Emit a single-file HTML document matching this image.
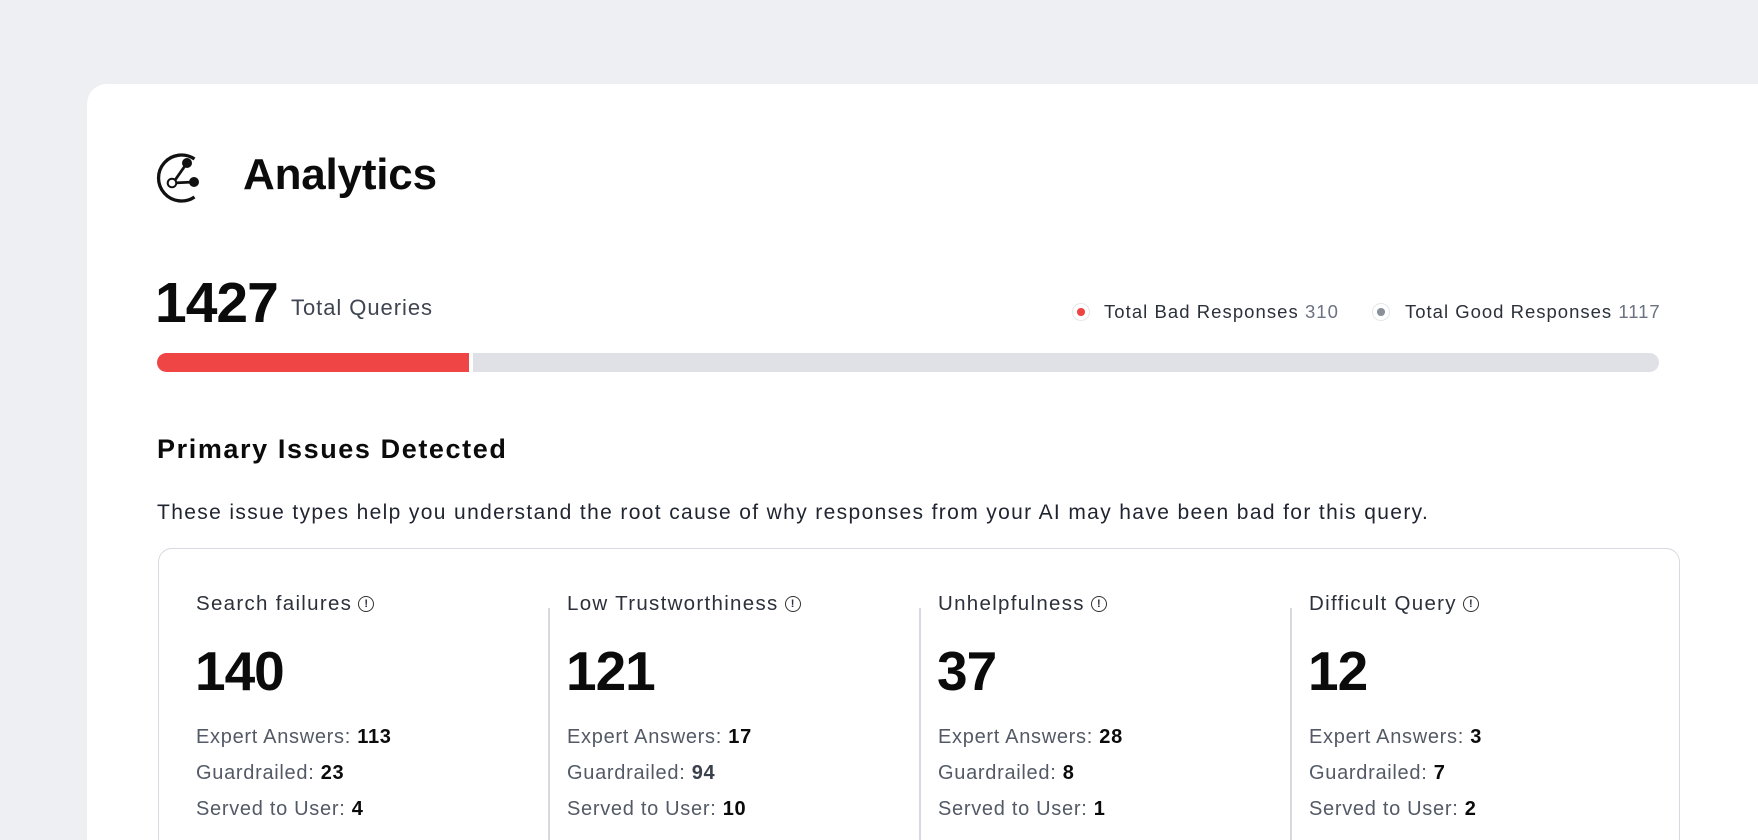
<!DOCTYPE html>
<html><head><meta charset="utf-8"><style>
*{margin:0;padding:0;box-sizing:border-box}
html,body{width:1758px;height:840px;overflow:hidden}
body{background:#eeeff3;font-family:"Liberation Sans",Arial,sans-serif;color:#0b0b0b}
#wrap{position:relative;width:1758px;height:840px;overflow:hidden}
.card{position:absolute;left:87px;top:84px;width:1671px;height:756px;background:#fff;border-radius:20px 0 0 0}
.abs{position:absolute;white-space:nowrap}
.title{left:243px;top:150px;font-size:44px;font-weight:bold;letter-spacing:-0.2px}
.big{font-weight:bold;letter-spacing:-1px}
.muted{color:#3f4552}
.leg{font-size:18.5px;color:#2b303b;top:301px;letter-spacing:1.05px}
.leg span{color:#6b7280}
.dot{position:absolute;width:18px;height:18px;border-radius:50%;border:1.5px solid #e5e7eb;top:303px;background:#fff}
.dot i{position:absolute;left:4px;top:4px;width:7.5px;height:7.5px;border-radius:50%}
.bar{position:absolute;top:353px;height:19px;border-radius:10px}
.box{position:absolute;left:158px;top:548px;width:1522px;height:320px;border:1.5px solid #d6d9df;border-radius:14px}
.div{position:absolute;top:608px;width:1.5px;height:240px;background:#d6d9df}
.lbl{font-size:20.5px;color:#2b303b;top:592px;letter-spacing:1.3px}
.info{display:inline-block;width:16px;height:16px;border:1.3px solid #333;border-radius:50%;font-size:11px;text-align:center;line-height:14px;vertical-align:3px;margin-left:6px;font-weight:bold;letter-spacing:0}
.num{font-size:55px;top:639px}
.row{font-size:20px;color:#535a66;letter-spacing:0.7px}
.row b{color:#0b0b0b}
</style></head><body><div id="wrap">
<div class="card"></div>
<svg class="abs" style="left:150px;top:148px" width="60" height="60" viewBox="150 148 60 60">
<path d="M194.5 159 A23 23 0 1 0 194.5 197" fill="none" stroke="#111" stroke-width="3.3"/>
<line x1="173" y1="183" x2="187" y2="163" stroke="#111" stroke-width="2.8"/>
<line x1="173" y1="183" x2="194" y2="182" stroke="#111" stroke-width="2.8"/>
<circle cx="187" cy="163" r="5" fill="#111"/>
<circle cx="194" cy="182" r="5" fill="#111"/>
<circle cx="172" cy="183" r="4.3" fill="#fff" stroke="#111" stroke-width="2"/>
</svg>
<div class="abs title">Analytics</div>
<div class="abs big" style="left:155px;top:270px;font-size:57px">1427</div>
<div class="abs muted" style="left:291px;top:295px;font-size:22px;letter-spacing:0.95px">Total Queries</div>
<div class="dot" style="left:1072px"><i style="background:#ef4444"></i></div>
<div class="abs leg" style="left:1104px">Total Bad Responses <span>310</span></div>
<div class="dot" style="left:1372px"><i style="background:#8b919c"></i></div>
<div class="abs leg" style="left:1405px;letter-spacing:1px">Total Good Responses <span>1117</span></div>
<div class="bar" style="left:157px;width:312px;background:#ef4545;border-radius:10px 0 0 10px"></div>
<div class="bar" style="left:473px;width:1186px;background:#dfe1e7;border-radius:0 10px 10px 0"></div>
<div class="abs" style="left:157px;top:434px;font-size:27px;font-weight:bold;letter-spacing:1.6px">Primary Issues Detected</div>
<div class="abs" style="left:157px;top:501px;font-size:21px;color:#1f2430;letter-spacing:1.36px">These issue types help you understand the root cause of why responses from your AI may have been bad for this query.</div>
<div class="box"></div>
<div class="div" style="left:548px"></div>
<div class="div" style="left:919px"></div>
<div class="div" style="left:1290px"></div>

<div class="abs lbl" style="left:196px">Search failures<span class="info">!</span></div>
<div class="abs big num" style="left:195px">140</div>
<div class="abs row" style="left:196px;top:726px">Expert Answers: <b>113</b></div>
<div class="abs row" style="left:196px;top:762px">Guardrailed: <b>23</b></div>
<div class="abs row" style="left:196px;top:798px">Served to User: <b>4</b></div>

<div class="abs lbl" style="left:567px">Low Trustworthiness<span class="info">!</span></div>
<div class="abs big num" style="left:566px">121</div>
<div class="abs row" style="left:567px;top:726px">Expert Answers: <b>17</b></div>
<div class="abs row" style="left:567px;top:762px">Guardrailed: <b style="color:#3a404c">94</b></div>
<div class="abs row" style="left:567px;top:798px">Served to User: <b>10</b></div>

<div class="abs lbl" style="left:938px">Unhelpfulness<span class="info">!</span></div>
<div class="abs big num" style="left:937px">37</div>
<div class="abs row" style="left:938px;top:726px">Expert Answers: <b>28</b></div>
<div class="abs row" style="left:938px;top:762px">Guardrailed: <b>8</b></div>
<div class="abs row" style="left:938px;top:798px">Served to User: <b>1</b></div>

<div class="abs lbl" style="left:1309px">Difficult Query<span class="info">!</span></div>
<div class="abs big num" style="left:1308px">12</div>
<div class="abs row" style="left:1309px;top:726px">Expert Answers: <b>3</b></div>
<div class="abs row" style="left:1309px;top:762px">Guardrailed: <b>7</b></div>
<div class="abs row" style="left:1309px;top:798px">Served to User: <b>2</b></div>
</div></body></html>
